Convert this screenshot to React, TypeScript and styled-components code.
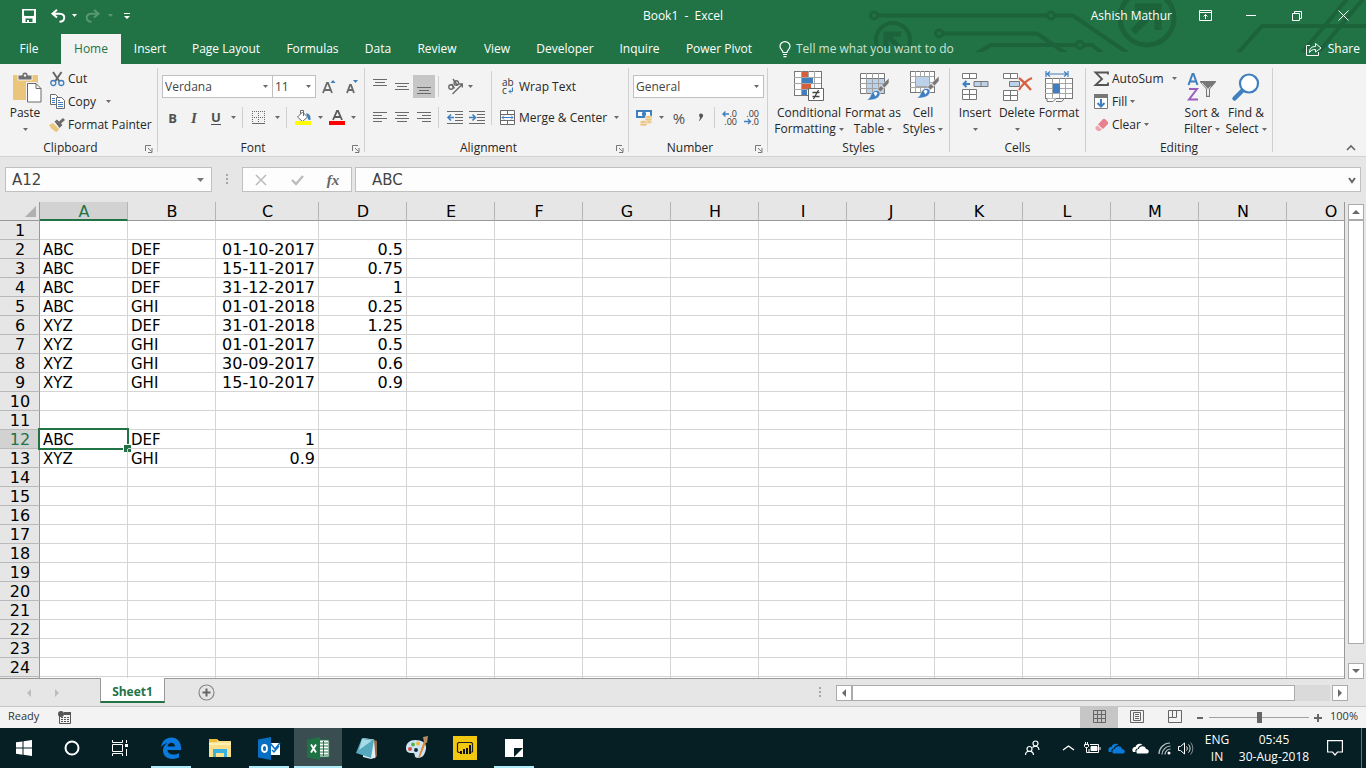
import React from "react";
import styled, { createGlobalStyle, css } from "styled-components";

const green = "#217346";
const ink = "#262626";
const steel = "#6a6a6a";
const blue = "#3f7fbf";
const uiFont = '"Open Sans", "Noto Sans", sans-serif';
const cellFont = '"DejaVu Sans", Verdana, sans-serif';

const GlobalStyle = createGlobalStyle`
  * { box-sizing: border-box; }
  body { margin: 0; font-family: ${uiFont}; font-size: 12px; line-height: 16px; color: ${ink}; }
  button, input, select { font: inherit; color: inherit; margin: 0; padding: 0; border: 0; background: none; border-radius: 0; outline: none; }
  button { cursor: pointer; }
  svg { display: block; flex: none; overflow: visible; }
`;

const Window = styled.div`
  display: flex;
  flex-direction: column;
  height: 100vh;
  overflow: hidden;
  background: #e6e6e6;
`;

/* ---------- title bar and tabs ---------- */

const Header = styled.header`
  position: relative;
  flex: none;
  background: ${green};
  color: #fff;
`;

const Circuit = styled.svg`
  position: absolute;
  top: 0;
  right: 0;
  overflow: hidden;
`;

const TitleBar = styled.div`
  position: relative;
  display: grid;
  grid-template-columns: 1fr auto 1fr;
  align-items: center;
  height: 34px;
  padding-bottom: 3px;
`;

const QuickAccess = styled.div`
  display: flex;
  align-items: center;
  padding-left: 16px;
`;

const QuickButton = styled.button<{ $w: number; $dim?: boolean }>`
  display: flex;
  align-items: center;
  justify-content: center;
  width: ${(p) => p.$w}px;
  height: 24px;
  opacity: ${(p) => (p.$dim ? 0.25 : 1)};
`;

const Title = styled.div`
  white-space: pre;
`;

const WindowControls = styled.div`
  display: flex;
  align-items: center;
  justify-content: flex-end;
`;

const UserName = styled.button`
  margin-right: 10px;
`;

const WindowButton = styled.button`
  display: flex;
  align-items: center;
  justify-content: center;
  width: 46px;
  height: 31px;
`;

const TabBar = styled.nav`
  position: relative;
  display: flex;
  height: 30px;
`;

const TabButton = styled.button<{ $w: number; $active?: boolean }>`
  width: ${(p) => p.$w}px;
  white-space: nowrap;
  ${(p) => p.$active && css`background: #f3f3f3; color: ${green};`}
`;

const TellMe = styled.button`
  display: flex;
  align-items: center;
  gap: 5px;
  margin-left: 14px;
  color: #cfe3d7;
  white-space: nowrap;
`;

const Share = styled.button`
  display: flex;
  align-items: center;
  gap: 6px;
  margin-left: auto;
  padding-right: 6px;
`;

/* ---------- ribbon ---------- */

const Ribbon = styled.div`
  display: flex;
  flex: none;
  height: 93px;
  background: #f3f3f3;
  border-bottom: 1px solid #d2d2d2;
`;

const GroupBox = styled.section<{ $w: number }>`
  display: flex;
  flex-direction: column;
  flex: none;
  width: ${(p) => p.$w}px;
`;

const GroupBody = styled.div<{ $left?: number }>`
  display: flex;
  height: 76px;
  padding-left: ${(p) => p.$left ?? 4}px;
`;

const GroupFooter = styled.div`
  display: flex;
  align-items: center;
  height: 16px;
`;

const GroupName = styled.div`
  flex: 1;
  text-align: center;
`;

const Launcher = styled.button`
  display: flex;
  width: 16px;
  height: 14px;
  padding: 4px 0 0 4px;
`;

const GroupLine = styled.div`
  flex: none;
  width: 1px;
  margin: 4px 0;
  background: #d0d0d0;
`;

const BigButton = styled.button<{ $w: number }>`
  display: flex;
  flex-direction: column;
  align-items: center;
  width: ${(p) => p.$w}px;
  padding-top: 7px;
  white-space: nowrap;
`;

const BigIcon = styled.span`
  display: flex;
  align-items: center;
  justify-content: center;
  height: 32px;
  margin-bottom: 2px;
`;

const BigLine = styled.span`
  display: flex;
  align-items: center;
  justify-content: center;
  gap: 3px;
  height: 16px;
`;

const Stack = styled.div<{ $left?: number; $right?: number }>`
  display: flex;
  flex-direction: column;
  padding-top: 3px;
  margin-left: ${(p) => p.$left ?? 0}px;
  margin-right: ${(p) => p.$right ?? 0}px;
`;

const SmallButton = styled.button`
  display: flex;
  align-items: center;
  gap: 3px;
  height: 23px;
  white-space: nowrap;
`;

const IconSlot = styled.span`
  display: flex;
  align-items: center;
  justify-content: center;
  width: 16px;
`;

const Rows = styled.div<{ $left?: number }>`
  display: flex;
  flex-direction: column;
  padding-top: 7px;
  margin-left: ${(p) => p.$left ?? 0}px;
`;

const Row = styled.div`
  display: flex;
  align-items: center;
  height: 31px;
`;

const ToolButton = styled.button<{ $w?: number; $on?: boolean }>`
  display: flex;
  align-items: center;
  justify-content: center;
  flex: none;
  width: ${(p) => p.$w ?? 22}px;
  height: 23px;
  color: #505050;
  background: ${(p) => (p.$on ? "#c6c6c6" : "none")};
`;

const Glyph = styled.span<{ $italic?: boolean; $under?: boolean; $serif?: boolean; $light?: boolean }>`
  font-size: ${(p) => (p.$light || p.$serif ? 15 : 13)}px;
  font-weight: ${(p) => (p.$light ? 400 : 700)};
  font-style: ${(p) => (p.$italic ? "italic" : "normal")};
  font-family: ${(p) => (p.$serif ? '"Liberation Serif", serif' : uiFont)};
  border-bottom: ${(p) => (p.$under ? "1px solid #505050" : "0")};
  line-height: 14px;
`;

const ToolLine = styled.div<{ $h?: number }>`
  flex: none;
  width: 1px;
  height: ${(p) => p.$h ?? 21}px;
  margin: 0 3px;
  background: #d0d0d0;
`;

const LabelButton = styled.button`
  display: flex;
  align-items: center;
  gap: 3px;
  height: 31px;
  white-space: nowrap;
`;

const LabelText = styled.span<{ $w?: number }>`
  width: ${(p) => (p.$w ? `${p.$w}px` : "auto")};
  text-align: left;
`;

const Combo = styled.label<{ $w: number; $joined?: boolean }>`
  position: relative;
  display: flex;
  align-items: center;
  width: ${(p) => p.$w}px;
  height: 23px;
  margin-left: ${(p) => (p.$joined ? -1 : 0)}px;
  border: 1px solid #c0c0c0;
  background: #fff;
  color: #444;
  svg { position: absolute; right: 4px; pointer-events: none; }
`;

const ComboSelect = styled.select`
  appearance: none;
  width: 100%;
  height: 21px;
  padding-left: 2px;
`;

const RibbonEnd = styled.div`
  display: flex;
  flex: 1;
  align-items: flex-end;
  justify-content: flex-end;
  padding: 0 10px 4px 0;
`;

/* ---------- formula bar ---------- */

const FormulaBar = styled.div`
  display: flex;
  align-items: center;
  flex: none;
  height: 45px;
  padding: 0 5px;
  font-family: ${cellFont};
  font-size: 15px;
  color: #444;
`;

const Field = styled.div<{ $w?: number }>`
  display: flex;
  align-items: center;
  ${(p) => (p.$w ? css`flex: none; width: ${p.$w}px;` : css`flex: 1; min-width: 0;`)}
  height: 25px;
  border: 1px solid #c0c0c0;
  background: #fdfdfd;
`;

const FieldInput = styled.input<{ $pad: number }>`
  flex: 1;
  min-width: 0;
  height: 23px;
  padding-left: ${(p) => p.$pad}px;
`;

const FieldButton = styled.button<{ $w: number }>`
  display: flex;
  align-items: center;
  justify-content: center;
  width: ${(p) => p.$w}px;
  height: 23px;
`;

const DotsSlot = styled.div`
  display: flex;
  justify-content: center;
  width: 30px;
`;

const FieldGap = styled.div`
  width: 3px;
`;

const FxGlyph = styled.span`
  font: italic 700 15px/16px "Liberation Serif", serif;
  color: #666;
`;

/* ---------- worksheet ---------- */

const SheetArea = styled.main`
  display: flex;
  flex: 1;
  min-height: 0;
`;

const GridPane = styled.div`
  flex: 1;
  min-width: 0;
  overflow: hidden;
  background: #fff;
  border-right: 1px solid #999;
  border-bottom: 1px solid #999;
`;

const Grid = styled.table`
  table-layout: fixed;
  width: 1375px;
  border-collapse: separate;
  border-spacing: 0;
  background: #fff;
  font-family: ${cellFont};
  color: #000;
`;

const ColHead = styled.th<{ $active?: boolean; $corner?: boolean }>`
  height: 19px;
  padding: ${(p) => (p.$active ? "2px 0 0 1px" : "2px 0 0 1px")};
  font-size: 16px;
  font-weight: 400;
  line-height: 15px;
  vertical-align: top;
  background: ${(p) => (p.$active ? "#d2d2d2" : "#e6e6e6")};
  color: ${(p) => (p.$active ? green : "#000")};
  border-right: 1px solid ${(p) => (p.$corner ? "#999" : "#b4b4b4")};
  border-bottom: ${(p) => (p.$active ? `2px solid ${green}` : "1px solid #999")};
  svg { margin: 2px 0 0 24px; }
`;

const RowHead = styled.th<{ $active?: boolean }>`
  height: 19px;
  padding: 2px 0 0 1px;
  font-size: 16px;
  font-weight: 400;
  line-height: 16px;
  background: ${(p) => (p.$active ? "#d2d2d2" : "#e6e6e6")};
  color: ${(p) => (p.$active ? green : "#000")};
  border-right: 1px solid #999;
  border-bottom: 1px solid #b9b9b9;
`;

const Cell = styled.td<{ $num?: boolean }>`
  position: relative;
  height: 19px;
  padding: 2px 3px 0;
  font-size: ${(p) => (p.$num ? 16 : 15)}px;
  line-height: 16px;
  text-align: ${(p) => (p.$num ? "right" : "left")};
  white-space: nowrap;
  border-right: 1px solid #d4d4d4;
  border-bottom: 1px solid #d4d4d4;
`;

const Selection = styled.div`
  position: absolute;
  inset: -2px;
  border: 2px solid ${green};
  &::after {
    content: "";
    position: absolute;
    right: -5px;
    bottom: -5px;
    width: 7px;
    height: 7px;
    background: ${green};
    border: 1px solid #fff;
  }
`;

const VScroll = styled.div`
  display: flex;
  flex-direction: column;
  flex: none;
  width: 16px;
  margin: 2px 2px 0 3px;
`;

const ScrollButton = styled.button`
  display: flex;
  align-items: center;
  justify-content: center;
  flex: none;
  width: 16px;
  height: 16px;
  background: #fff;
  border: 1px solid #ababab;
`;

const VTrack = styled.div`
  flex: 1;
  padding-bottom: 19px;
`;

const VThumb = styled.div`
  height: 100%;
  background: #fff;
  border: 1px solid #ababab;
`;

const SheetBar = styled.div`
  display: flex;
  align-items: center;
  flex: none;
  height: 28px;
  border-bottom: 1px solid #c6c6c6;
`;

const SheetNav = styled.div`
  display: flex;
  width: 100px;
  padding-left: 15px;
`;

const BarButton = styled.button<{ $w: number }>`
  display: flex;
  align-items: center;
  justify-content: center;
  width: ${(p) => p.$w}px;
  height: 22px;
`;

const SheetTab = styled.button`
  position: relative;
  align-self: flex-start;
  width: 65px;
  height: 25px;
  margin-top: -1px;
  margin-right: 30px;
  padding-top: 4px;
  background: #fff;
  color: ${green};
  font-weight: 700;
  border: solid #999;
  border-width: 0 1px 2px;
  border-bottom-color: ${green};
`;

const HScroll = styled.div`
  display: flex;
  width: 512px;
  margin-right: 18px;
`;

const HTrack = styled.div`
  flex: 1;
  display: flex;
  padding-right: 35px;
  margin-right: 2px;
  background: #dadada;
`;

const HThumb = styled.div`
  flex: 1;
  background: #fff;
  border: 1px solid #ababab;
`;

const DotsGap = styled.div`
  display: flex;
  margin: 0 15px 0 auto;
`;

/* ---------- status bar ---------- */

const StatusBar = styled.footer`
  display: flex;
  align-items: center;
  flex: none;
  height: 21px;
  padding: 0 8px;
  background: #f3f3f3;
  font-size: 11px;
  color: #333;
`;

const StatusText = styled.span<{ $w: number; $right?: boolean }>`
  width: ${(p) => p.$w}px;
  padding-bottom: 3px;
  text-align: ${(p) => (p.$right ? "right" : "left")};
`;

const Views = styled.div`
  display: flex;
  align-self: stretch;
  margin-left: auto;
`;

const ViewButton = styled.button<{ $on?: boolean }>`
  display: flex;
  align-items: center;
  justify-content: center;
  width: 38px;
  padding-bottom: 2px;
  background: ${(p) => (p.$on ? "#c6c6c6" : "none")};
`;

const ZoomSlider = styled.input`
  appearance: none;
  width: 106px;
  height: 12px;
  background: linear-gradient(#a0a0a0, #a0a0a0) center / 100px 1px no-repeat;
  &::-webkit-slider-thumb {
    appearance: none;
    width: 5px;
    height: 11px;
    background: #666;
  }
`;

/* ---------- task bar ---------- */

const TaskBar = styled.div`
  display: flex;
  flex: none;
  height: 40px;
  background: #051f24;
  color: #fff;
`;

const SystemButtons = styled.div`
  display: flex;
  width: 147px;
`;

const Apps = styled.div`
  display: flex;
  gap: 1px;
`;

const TaskButton = styled.button<{ $open?: boolean; $active?: boolean }>`
  display: flex;
  align-items: center;
  justify-content: center;
  width: 48px;
  height: 40px;
  background: ${(p) => (p.$active ? "#3a4e52" : "none")};
  ${(p) => p.$open && css`
    background-image: linear-gradient(#aeeaf8, #aeeaf8);
    background-repeat: no-repeat;
    background-position: center bottom;
    background-size: ${p.$active ? 48 : 40}px 2px;
  `}
`;

const Tray = styled.div`
  display: flex;
  align-items: center;
  margin-left: auto;
`;

const TrayButton = styled.button<{ $w?: number }>`
  display: flex;
  align-items: center;
  justify-content: center;
  width: ${(p) => p.$w ?? 24}px;
  height: 40px;
  text-align: center;
  white-space: nowrap;
  line-height: 17px;
`;

const ShowDesktop = styled.button`
  width: 5px;
  height: 40px;
  border-left: 1px solid #5f7275;
`;

/* ---------- small drawings ---------- */

const Caret = ({ color = "#6a6a6a" }: { color?: string }) => (
  <svg width="5" height="3" viewBox="0 0 5 3"><path d="M0 0h5L2.500 3z" fill={color} /></svg>
);

const Dots = () => (
  <svg width="2" height="11" fill="#a6a6a6"><path d="M0 0h2v2H0zM0 4h2v2H0zM0 8h2v2H0z" /></svg>
);

const Triangle = ({ dir, color = "#6a6a6a" }: { dir: "up" | "down" | "left" | "right"; color?: string }) => {
  const shapes = { up: "M0 6l4-4 4 4z", down: "M0 2l4 4 4-4z", left: "M6 0L2 4l4 4z", right: "M2 0l4 4-4 4z" };
  return <svg width="8" height="8"><path d={shapes[dir]} fill={color} /></svg>;
};

const Lines = ({ rows, top = 0 }: { rows: [number, number][]; top?: number }) => (
  <svg width="14" height="15" stroke={steel} shapeRendering="crispEdges">
    {rows.map(([a, b], i) => <path key={i} d={`M${a} ${top + i * 3 + 0.5}H${b}`} />)}
  </svg>
);

const LauncherIcon = () => (
  <svg width="8" height="8" fill="none" stroke="#777"><path d="M.5 6V.5H6M3 3l3.500 3.500M7 3v4.500H3" /></svg>
);

const SaveIcon = () => (
  <svg width="14" height="14" viewBox="0 0 14 14"><path fillRule="evenodd" fill="#fff" d="M0 0h14v14H0zM2 1.500v5l1 .5h8l1-.5v-5zM3.500 9.500V13H5v-2h2v2h3.500V9.500z" /></svg>
);

const UndoIcon = ({ flip }: { flip?: boolean }) => (
  <svg width="15" height="14" viewBox="0 0 15 14" fill="none" stroke="#fff" strokeWidth="2">
    <g transform={flip ? "translate(15 0) scale(-1 1)" : undefined}><path d="M6 .8L1.500 4.700 6 8.600M2 4.700h7c6 0 5.500 8-.5 8" /></g>
  </svg>
);

const CustomizeIcon = () => (
  <svg width="6" height="8" fill="#fff"><path d="M0 1h6v1H0zM0 4h6L3 7z" /></svg>
);

const BulbIcon = () => (
  <svg width="12" height="17" viewBox="0 0 12 17" fill="none" stroke="#fff" strokeWidth="1.200">
    <path d="M4 11.500C4 9 1 8.500 1 5.300A5 4.700 0 0 1 11 5.300C11 8.500 8 9 8 11.500zM4 13.500h4M4.500 15.700h3" />
  </svg>
);

const ShareIcon = () => (
  <svg width="16" height="14" viewBox="0 0 16 14" fill="none" stroke="#fff">
    <path d="M4 3.500H.5v10h12V10M3.500 10.500c0-4 2-6 6-6V1.500l5.500 4.500-5.500 4V7.500c-3 0-4.500.5-6 3z" />
  </svg>
);

const PasteIcon = () => (
  <svg width="26" height="31" viewBox="-1 0 26 31">
    <rect x="0" y="3" width="25" height="25" rx="1" fill="#ecc57c" />
    <path d="M5 8V3h4c0-4 6-4 6 0h4v5z" fill="#6e6e6e" stroke="#f3f3f3" />
    <circle cx="12" cy="3.500" r="1.200" fill="#f3f3f3" />
    <path d="M14.500 11.500h8.500l5 5v13.500H14.500z" fill="#fff" stroke="#f3f3f3" strokeWidth="3" />
    <path d="M14.500 11.500h8.500l5 5v13.500H14.500z M23 11.500v5h5" fill="#fff" stroke="#6a6a6a" />
  </svg>
);

const CutIcon = () => (
  <svg width="15" height="16" viewBox="0 0 15 16" fill="none">
    <path d="M3 1l6.500 9.500M11.500 1L5 10.500" stroke="#666" strokeWidth="2" />
    <circle cx="3.300" cy="12" r="2.500" stroke={blue} strokeWidth="1.300" /><circle cx="11.300" cy="12" r="2.500" stroke={blue} strokeWidth="1.300" />
  </svg>
);

const CopyIcon = () => (
  <svg width="15" height="15" viewBox="0 0 15 15" fill="#fff" stroke="#6a6a6a">
    <path d="M.5.500h5l3 3v7h-8z" /><path d="M6.500 3.500h5l3 3v8h-8z" />
    <path d="M2 4.500h3M2 6.500h3M2 8.500h3M8 8.500h5M8 10.500h5M8 12.500h5M8 6.500h2" stroke={blue} />
  </svg>
);

const PainterIcon = () => (
  <svg width="16" height="14" viewBox="0 0 16 14">
    <path d="M0 7l4-2 6 6-2 3-3-1-1-2-1 .5z" fill="#ecc57c" />
    <path d="M5.500 3.500L8 1.500l2 2 4-3.500L16 2l-4 3.500L13.500 7l-3 3z" fill="#6a6a6a" />
  </svg>
);

const BordersIcon = () => (
  <svg width="14" height="14" shapeRendering="crispEdges" stroke="#6a6a6a" fill="none">
    <path d="M.5 0v12M6.500 0v12M12.500 0v12M0 .5h13M0 6.500h13" strokeDasharray="1 1" /><path d="M0 12.500h13" />
  </svg>
);

const FillColorIcon = () => (
  <svg width="17" height="17" viewBox="0 0 17 17">
    <path d="M7.500 3l5 5-5 4.500L2.500 8z M5.500 5V1.500h3V7" fill="#fff" stroke="#6a6a6a" />
    <path d="M11 4.500c3-.5 5 2 4.500 6.500-2 .5-3-1-3-3z" fill={blue} /><path d="M0 12h16v4H0z" fill="#ff0" />
  </svg>
);

const FontColorIcon = () => (
  <svg width="17" height="17" viewBox="0 0 17 17">
    <path d="M4 11L8 2h1l4 9M5.500 8h6" stroke="#5a5a5a" strokeWidth="1.800" fill="none" /><path d="M0 12h16v4H0z" fill="#f00" />
  </svg>
);

const SizeIcon = ({ grow }: { grow?: boolean }) => (
  <svg width="16" height="18" viewBox="0 0 16 18">
    {grow
      ? <><path d="M1 15L5 5h1l4 10M2.500 12h6" fill="none" stroke="#6a6a6a" strokeWidth="1.800" /><path d="M8.500 5L11 2l2.500 3z" fill={blue} /></>
      : <><path d="M2 15l3-8h1l3 8M3 12h5" fill="none" stroke="#6a6a6a" strokeWidth="1.800" /><path d="M8 2h5l-2.500 3z" fill={blue} /></>}
  </svg>
);

const OrientationIcon = () => (
  <svg width="17" height="16" viewBox="0 0 17 16" fill="none" stroke="#6a6a6a" strokeWidth="1.400">
    <path d="M5.500 15L15 5.500M11.500 5H15.300v3.500" /><circle cx="4" cy="8" r="2.200" /><path d="M4.500 5l3 4.500M6 0l4.500 6.500" /><circle cx="9.300" cy="4" r="2.200" />
  </svg>
);

const IndentIcon = ({ right }: { right?: boolean }) => (
  <svg width="17" height="14" shapeRendering="crispEdges" fill="none" stroke="#6a6a6a">
    <path d="M0 .5h16M8 3.500h8M8 6.500h8M8 9.500h8M0 12.500h16" />
    <g shapeRendering="auto" stroke={blue} strokeWidth="1.600"><path d={right ? "M0 6.500h6M3.500 3.500l3 3-3 3" : "M1 6.500h6M4 3.500l-3 3 3 3"} /></g>
  </svg>
);

const WrapIcon = () => (
  <svg width="16" height="16" viewBox="0 0 16 16">
    <text x="2" y="7" fontSize="10" fontFamily="Open Sans" fill="#333">ab</text>
    <text x="2" y="15" fontSize="10" fontFamily="Open Sans" fill="#333">c</text>
    <path d="M12.500 8.500v4H9M11 10.500l-2 2 2 2" fill="none" stroke={blue} />
  </svg>
);

const MergeIcon = () => (
  <svg width="16" height="16" viewBox="0 0 16 16" fill="#fff" stroke="#6a6a6a">
    <path d="M.5.500h14v14H.5zM.5 4.500h14M.5 10.500h14M7.500.500v4M7.500 10.500v4" />
    <path d="M2 7.500h11M4 5.500l-2 2 2 2M11 5.500l2 2-2 2" fill="none" stroke={blue} />
  </svg>
);

const CurrencyIcon = () => (
  <svg width="17" height="17" viewBox="0 0 17 17">
    <path d="M1 2h14v6H1z" fill="#fff" stroke={blue} strokeWidth="2" /><circle cx="8" cy="5" r="2.200" fill={blue} />
    <g fill="#ecc57c" stroke="#f3f3f3" strokeWidth=".5">
      <ellipse cx="12.500" cy="13" rx="3.500" ry="1.500" /><ellipse cx="12.500" cy="10.500" rx="3.500" ry="1.500" /><ellipse cx="12.500" cy="8" rx="3.500" ry="1.500" />
      <ellipse cx="7.500" cy="15.500" rx="3.500" ry="1.500" /><ellipse cx="7.500" cy="13" rx="3.500" ry="1.500" />
    </g>
  </svg>
);

const DecimalIcon = ({ less }: { less?: boolean }) => (
  <svg width="16" height="16" viewBox="0 0 16 16">
    <text x="15" y="7" fontSize="9" textAnchor="end" fontFamily="Open Sans" fill="#333">{less ? ".00" : ".0"}</text>
    <text x="15" y="15" fontSize="9" textAnchor="end" fontFamily="Open Sans" fill="#333">{less ? ".0" : ".00"}</text>
    <path d={less ? "M0 11.500h6M4 9l2.500 2.500L4 14" : "M1 4h6M3.500 1.500L1 4l2.500 2.500"} fill="none" stroke={blue} strokeWidth="1.400" />
  </svg>
);

const SheetGrid = ({ w, h, cols, rows }: { w: number; h: number; cols: number; rows: number }) => {
  let d = "";
  for (let i = 1; i < cols; i++) d += `M${Math.round((i * w) / cols) + 0.5} 0V${h}`;
  for (let i = 1; i < rows; i++) d += `M0 ${Math.round((i * h) / rows) + 0.5}H${w}`;
  return <><rect x=".5" y=".5" width={w} height={h} fill="#fff" stroke="#777" /><path d={d} stroke="#a6a6a6" /></>;
};

const Brush = () => (
  <g>
    <path d="M29 5v5l-4.500 5-3-3z" fill="#7a7a7a" stroke="#f3f3f3" strokeWidth=".6" />
    <path d="M21 12.500l3 3-3.500 3.500-3-3z" fill="#7a7a7a" stroke="#f3f3f3" strokeWidth=".6" />
    <path d="M16 17.500c3-.5 5 2 3.500 5-2 4-8 5-13 4.500 3.500-1.500 3.500-3.500 4.500-5.500 1-2.500 3-4 5-4z" fill={blue} stroke="#f3f3f3" strokeWidth=".6" />
    <path d="M13.500 20c1.500-1.500 3.500-1 4 .5l-2 3z" fill="#fff" />
  </g>
);

const ConditionalIcon = () => (
  <svg width="32" height="32" viewBox="-1 0 32 32">
    <g transform="translate(0 0)"><SheetGrid w={27} h={24} cols={4} rows={4} /></g>
    <path d="M8 1h6v5H8zM8 13h9v5H8z" fill="#d75f3c" /><path d="M8 7h11v5H8zM8 19h5v5H8z" fill={blue} />
    <path d="M14.500 17.500h15v12h-15z" fill="#fff" stroke="#666" />
    <path d="M18.500 21.500h7M18.500 25.500h7M24.500 19l-5 9" stroke="#444" strokeWidth="1.300" />
  </svg>
);

const FormatTableIcon = () => (
  <svg width="32" height="32" viewBox="-3 0 32 32">
    <g transform="translate(0 2)"><rect x=".5" y=".5" width="24" height="20" fill="#fff" /><path d="M7 6h18v15H7z" fill="#bcd2ea" /><path d="M.5.500h24v20H.5zM.5 5.500h24" fill="none" stroke="#777" /><path d="M6.500 0v21M12.500 0v21M18.500 0v21M0 10.500h24M0 15.500h24" stroke="#a0a0a0" /><Brush /></g>
  </svg>
);

const CellStylesIcon = () => (
  <svg width="32" height="32" viewBox="-3 0 32 32">
    <g transform="translate(0 0)"><SheetGrid w={24} h={21} cols={5} rows={4} /><path d="M5.500 5.500h14v10h-14z" fill="#bcd2ea" stroke="#a6a6a6" /><Brush /></g>
  </svg>
);

const CellRows = ({ at }: { at: number[] }) => (
  <>{at.map((y) => <path key={y} d={`M.5 ${y}.5h14v5h-14zM7.500 ${y}v5`} />)}</>
);

const InsertIcon = () => (
  <svg width="28" height="30" viewBox="-1 0 28 30" fill="#fff" stroke="#777">
    <CellRows at={[1, 17, 22]} /><path d="M12 9.500h14v5H12zM19 9v5" fill="#bcd2ea" />
    <path d="M8 12H2M4.500 9L1.500 12l3 3" fill="none" stroke={blue} strokeWidth="2" />
  </svg>
);

const DeleteIcon = () => (
  <svg width="30" height="30" viewBox="-1 0 30 30" fill="#fff" stroke="#777">
    <CellRows at={[1, 18, 23]} /><path d="M6.500 9.500h10v5h-10z" fill="#bcd2ea" />
    <path d="M16 6c4 3 8 7 12 12M29 6c-5 2-10 7-13 12" fill="none" stroke="#d75f3c" strokeWidth="2.200" />
  </svg>
);

const FormatIcon = () => (
  <svg width="29" height="32" viewBox="0 0 29 32">
    <path d="M1 0v6M23 0v6M2 3h20M5 .5L2 3l3 2.500M19 .5L22 3l-3 2.500" fill="none" stroke={blue} strokeWidth="1.200" />
    <g transform="translate(0 7)"><SheetGrid w={27} h={20} cols={4} rows={4} /><path d="M8 6h7v9H8z" fill={blue} /></g>
    <path d="M2 27.500v3h6l3-3M11 30.500h6l2-3" fill="#fff" stroke="#777" />
  </svg>
);

const SumIcon = () => (
  <svg width="15" height="16" viewBox="0 0 15 16" fill="none" stroke="#555" strokeWidth="1.800"><path d="M14 3.500V1.500H1.500L8 8l-6.500 6H14v-2.500" /></svg>
);

const FillIcon = () => (
  <svg width="15" height="16" viewBox="0 0 15 16"><path d="M.5.500h13v14H.5z" fill="#fff" stroke="#777" /><path d="M0 0h14v4H0z" fill="#777" /><path d="M7 5v7M3.500 9L7 12.500 10.500 9" fill="none" stroke={blue} strokeWidth="2" /></svg>
);

const EraserIcon = () => (
  <svg width="15" height="14" viewBox="0 0 15 14"><path d="M9 1h2l3 3v2l-5 5-5-4.500z" fill="#e8808f" /><path d="M3.500 7.500L8 11.500 6 13H3.500L1.500 11V9z" fill="#f0a4ae" /></svg>
);

const SortIcon = () => (
  <svg width="30" height="30" viewBox="0 0 30 30" fill="none">
    <path d="M1.500 13L5.500 2h1l4 11M3 9.500h6" stroke={blue} strokeWidth="2" /><path d="M2 17h8L2 27.500h9" stroke="#9a5fbd" strokeWidth="2" />
    <path d="M13 9h16v1l-6 7v8h-4v-8l-6-7z" fill="#777" /><path d="M15 11l5.500 6v6.500h1V17l2-2.500" stroke="#eee" />
  </svg>
);

const FindIcon = () => (
  <svg width="28" height="29" viewBox="0 0 28 29"><path d="M10 18L2.500 25.500" stroke={blue} strokeWidth="4.500" strokeLinecap="round" /><circle cx="17" cy="10.500" r="9" fill="#fff" stroke={blue} strokeWidth="2.200" /></svg>
);

const Chevron = ({ up, w = 8, color = "#666", sw = 1.6 }: { up?: boolean; w?: number; color?: string; sw?: number }) => (
  <svg width={w + 2} height="8" fill="none" stroke={color} strokeWidth={sw}><path d={up ? `M1 6l${w / 2}-4 ${w / 2} 4` : `M1 2l${w / 2} 4 ${w / 2}-4`} /></svg>
);

const CircuitArt = () => (
  <Circuit width="500" height="52" viewBox="866 0 500 52" fill="none" stroke="#1c633b" strokeWidth="4" aria-hidden="true">
    <circle cx="874" cy="15.500" r="3.500" strokeWidth="3" /><path d="M878 15.500h169M1055 15.500h18l54 37" />
    <circle cx="1051" cy="15.500" r="3.500" strokeWidth="3" />
    <circle cx="893" cy="40" r="17" strokeWidth="4" /><path d="M886 48V34h15M887 35l17 17" strokeWidth="5" />
    <circle cx="939" cy="33.500" r="3.500" strokeWidth="3" /><path d="M943 33.500h94l29 20" />
    <path d="M977 53l14-8h84M1084 45h8l10 8" /><circle cx="1080" cy="45" r="3.500" strokeWidth="3" />
    <circle cx="1147" cy="18" r="27" strokeWidth="5" /><path d="M1135 7h23v23M1157 8l-24 24" strokeWidth="7" />
    <path d="M1238 53l24-27h104M1302 53l45-54M1318 53l45-54" />
  </Circuit>
);

/* ---------- task bar drawings ---------- */

const EdgeIcon = () => (
  <svg width="22" height="22" viewBox="0 0 22 22"><path fill="#0a7bdc" d="M1 10C2 4 6 .5 11.500.500 17 .5 21 5 21 10.500V13H7.500c.5 5.500 8 5.500 11.500 3v4.500C13 23.500 3 22 3 13.500 3 10 5 7.500 7.500 6 5 6.500 2.500 8 1 10zm6.500-.5H15C15 4.500 8 4.500 7.500 9.500z" /></svg>
);

const ExplorerIcon = () => (
  <svg width="22" height="19" viewBox="0 0 22 19"><path d="M0 0h8l2 2h12v16H0z" fill="#fbe08a" /><path d="M0 0h8v3H0z" fill="#eebb3b" /><path d="M0 4h22v2H0z" fill="#fff0b5" /><path d="M4 10h14v8h-3v-4H7v4H4z" fill="#3ab0e0" /></svg>
);

const OutlookIcon = () => (
  <svg width="22" height="23" viewBox="0 0 22 23"><path d="M12 6h10v12H12z" fill="#fff" /><path d="M12 6l5 6 5-6M14 13l2 2 5-6" fill="none" stroke="#0a6fc2" strokeWidth="1.500" /><path d="M0 2.500L13 0v23L0 20.500z" fill="#0a6fc2" /><ellipse cx="6.500" cy="11.500" rx="2.500" ry="3.500" fill="none" stroke="#fff" strokeWidth="1.800" /></svg>
);

const ExcelIcon = () => (
  <svg width="22" height="23" viewBox="0 0 22 23"><path d="M12 3h10v17H12z" fill="#fff" stroke="#217346" /><path d="M13 6h8M13 9h8M13 12h8M13 15h8M13 18h8M16.500 4v15" stroke="#217346" /><path d="M0 2.500L13 0v23L0 20.500z" fill="#1f7244" /><path d="M4 7.500l5 8M9 7.500l-5 8" stroke="#fff" strokeWidth="1.900" /></svg>
);

const NotepadIcon = () => (
  <svg width="24" height="23" viewBox="0 0 24 23"><path d="M19 3l3 1v15l-3 3z" fill="#8c6b4a" /><path d="M8 1l11 1.500 1.500 18-4.500 1.500-8-2z" fill="#e4eff3" /><path d="M7 1l12 2-3 18-15-5z" fill="#56a9bd" /><path d="M7 2l10 1.500L4 13z" fill="#a9dbe6" /></svg>
);

const PaintIcon = () => (
  <svg width="25" height="24" viewBox="0 0 25 24"><path d="M11 4c7 0 12 3 11 9-1 5-3 9-8 9s-2-5-5-5-7 0-7-5 4-8 9-8z" fill="#cfe5f5" /><circle cx="6" cy="13" r="2" fill="#d9503f" /><circle cx="9" cy="8.500" r="2" fill="#59b04e" /><circle cx="14" cy="7.500" r="2" fill="#f0b93a" /><circle cx="12" cy="14" r="2" fill="#12303a" /><path d="M21 2l-7 20 2-1 7-17z" fill="#e08a2e" /><path d="M19 1l5-1-1 7-3-1z" fill="#b98d63" /></svg>
);

const PowerBiIcon = () => (
  <svg width="24" height="24" viewBox="0 0 24 24"><path d="M0 0h24v24H0z" fill="#f2c811" /><path d="M7 16.500H5.500l-1-1v-8l1-1h13l1 1v8l-1 1" fill="none" stroke="#222" strokeWidth="1.200" /><path d="M8 15v3M11 13v5M14 12v6M17 9v9" stroke="#111" strokeWidth="2" /></svg>
);

const StickyIcon = () => (
  <svg width="18" height="18"><path d="M0 0h18v18H0z" fill="#fff" /><path d="M9 9h9l-9 9z" fill="#051f24" /></svg>
);

const Cloud = ({ color }: { color: string }) => (
  <svg width="17" height="11" viewBox="0 0 17 11" fill={color}><path d="M1 9C-.5 6 1 4 3.500 4 4 1 8-.5 10.500 2 7.500 2 6 4 6 5.500 4 5.500 3 7 3.500 9z" /><path d="M5 10.500C3.500 8 5 6 7 6c0-3 6-4 7 0 3.500 0 3.500 4.500 1 4.500z" /></svg>
);

/* ---------- content ---------- */

const tabs: [string, number][] = [
  ["File", 58], ["Home", 60], ["Insert", 58], ["Page Layout", 94], ["Formulas", 79], ["Data", 52],
  ["Review", 66], ["View", 54], ["Developer", 82], ["Inquire", 67], ["Power Pivot", 92],
];

const FileGap = styled.div`
  width: 3px;
`;

const columns = "ABCDEFGHIJKLMNO".split("");

const data: Record<number, string[]> = {
  2: ["ABC", "DEF", "01-10-2017", "0.5"],
  3: ["ABC", "DEF", "15-11-2017", "0.75"],
  4: ["ABC", "DEF", "31-12-2017", "1"],
  5: ["ABC", "GHI", "01-01-2018", "0.25"],
  6: ["XYZ", "DEF", "31-01-2018", "1.25"],
  7: ["XYZ", "GHI", "01-01-2017", "0.5"],
  8: ["XYZ", "GHI", "30-09-2017", "0.6"],
  9: ["XYZ", "GHI", "15-10-2017", "0.9"],
  12: ["ABC", "DEF", "1"],
  13: ["XYZ", "GHI", "0.9"],
};

const rowNumbers = Array.from({ length: 25 }, (_, i) => i + 1);

type GroupProps = { name: string; width: number; left?: number; launcher?: boolean; children: React.ReactNode };

const Group = ({ name, width, left, launcher, children }: GroupProps) => (
  <>
    <GroupBox $w={width} aria-label={name}>
      <GroupBody $left={left}>{children}</GroupBody>
      <GroupFooter>
        <GroupName>{name}</GroupName>
        {launcher && <Launcher aria-label={`${name} settings`}><LauncherIcon /></Launcher>}
      </GroupFooter>
    </GroupBox>
    <GroupLine />
  </>
);

const Big = ({ w, icon, first, second }: { w: number; icon: React.ReactNode; first: string; second?: string }) => (
  <BigButton $w={w}>
    <BigIcon>{icon}</BigIcon>
    <BigLine>{first}</BigLine>
    <BigLine>{second}<Caret /></BigLine>
  </BigButton>
);

const center3: [number, number][] = [[0, 14], [2, 12], [0, 14]];

export default function App() {
  return (
    <Window>
      <GlobalStyle />
      <Header>
        <CircuitArt />
        <TitleBar>
          <QuickAccess>
            <QuickButton $w={26} aria-label="Save"><SaveIcon /></QuickButton>
            <QuickButton $w={32} aria-label="Undo"><UndoIcon /></QuickButton>
            <QuickButton $w={0} aria-label="Undo list"><Caret color="#fff" /></QuickButton>
            <QuickButton $w={36} $dim aria-label="Redo"><UndoIcon flip /></QuickButton>
            <QuickButton $w={0} $dim aria-label="Redo list"><Caret color="#fff" /></QuickButton>
            <QuickButton $w={34} aria-label="Customize toolbar"><CustomizeIcon /></QuickButton>
          </QuickAccess>
          <Title>Book1  -  Excel</Title>
          <WindowControls>
            <UserName>Ashish Mathur</UserName>
            <WindowButton aria-label="Ribbon display"><svg width="13" height="11" fill="none" stroke="#fff"><path d="M.5.500h12v10H.5zM.5 2.500h12M6.500 9V4.500M4.500 6.500l2-2 2 2" /></svg></WindowButton>
            <WindowButton aria-label="Minimize"><svg width="10" height="2" fill="#fff"><path d="M0 0h10v1H0z" /></svg></WindowButton>
            <WindowButton aria-label="Restore"><svg width="10" height="10" fill="none" stroke="#fff"><path d="M.5 2.500h7v7h-7zM2.500 2.500v-2h7v7h-2" /></svg></WindowButton>
            <WindowButton aria-label="Close"><svg width="11" height="11" stroke="#fff"><path d="M.5.500l10 10M10.500.500l-10 10" /></svg></WindowButton>
          </WindowControls>
        </TitleBar>
        <TabBar>
          {tabs.map(([name, w]) => (
            <React.Fragment key={name}>
              <TabButton $w={w} $active={name === "Home"}>{name}</TabButton>
              {name === "File" && <FileGap />}
            </React.Fragment>
          ))}
          <TellMe><BulbIcon />Tell me what you want to do</TellMe>
          <Share><ShareIcon />Share</Share>
        </TabBar>
      </Header>

      <Ribbon>
        <Group name="Clipboard" width={157} launcher>
          <Big w={42} icon={<PasteIcon />} first="Paste" />
          <Stack $left={3}>
            <SmallButton><IconSlot><CutIcon /></IconSlot>Cut</SmallButton>
            <SmallButton><IconSlot><CopyIcon /></IconSlot><LabelText $w={35}>Copy</LabelText><Caret /></SmallButton>
            <SmallButton><IconSlot><PainterIcon /></IconSlot>Format Painter</SmallButton>
          </Stack>
        </Group>

        <Group name="Font" width={206} launcher>
          <Rows>
            <Row>
              <Combo $w={111}><ComboSelect aria-label="Font name"><option>Verdana</option></ComboSelect><Caret /></Combo>
              <Combo $w={44} $joined><ComboSelect aria-label="Font size"><option>11</option></ComboSelect><Caret /></Combo>
              <ToolButton $w={28} aria-label="Increase font size"><SizeIcon grow /></ToolButton>
              <ToolButton $w={18} aria-label="Decrease font size"><SizeIcon /></ToolButton>
            </Row>
            <Row>
              <ToolButton $w={21} aria-label="Bold"><Glyph>B</Glyph></ToolButton>
              <ToolButton aria-label="Italic"><Glyph $italic $serif>I</Glyph></ToolButton>
              <ToolButton aria-label="Underline"><Glyph $under>U</Glyph></ToolButton>
              <ToolButton $w={12} aria-label="Underline style"><Caret /></ToolButton>
              <ToolLine />
              <ToolButton $w={26} aria-label="Borders"><BordersIcon /></ToolButton>
              <ToolButton $w={11} aria-label="Border style"><Caret /></ToolButton>
              <ToolLine />
              <ToolButton $w={26} aria-label="Fill colour"><FillColorIcon /></ToolButton>
              <ToolButton $w={9} aria-label="Fill colours"><Caret /></ToolButton>
              <ToolButton $w={24} aria-label="Font colour"><FontColorIcon /></ToolButton>
              <ToolButton $w={9} aria-label="Font colours"><Caret /></ToolButton>
            </Row>
          </Rows>
        </Group>

        <Group name="Alignment" width={263} launcher>
          <Rows>
            <Row>
              <ToolButton aria-label="Top align"><Lines rows={center3} /></ToolButton>
              <ToolButton aria-label="Middle align"><Lines rows={center3} top={4} /></ToolButton>
              <ToolButton $on aria-label="Bottom align"><Lines rows={center3} top={8} /></ToolButton>
              <ToolLine />
              <ToolButton $w={26} aria-label="Orientation"><OrientationIcon /></ToolButton>
              <ToolButton $w={5} aria-label="Orientation list"><Caret /></ToolButton>
            </Row>
            <Row>
              <ToolButton aria-label="Align left"><Lines top={2} rows={[[0, 14], [0, 9], [0, 14], [0, 9]]} /></ToolButton>
              <ToolButton aria-label="Centre"><Lines top={2} rows={[[0, 14], [2, 12], [0, 14], [2, 12]]} /></ToolButton>
              <ToolButton aria-label="Align right"><Lines top={2} rows={[[0, 14], [5, 14], [0, 14], [5, 14]]} /></ToolButton>
              <ToolLine />
              <ToolButton $w={26} aria-label="Decrease indent"><IndentIcon /></ToolButton>
              <ToolButton $w={18} aria-label="Increase indent"><IndentIcon right /></ToolButton>
            </Row>
          </Rows>
          <Rows $left={2}><ToolLine $h={54} /></Rows>
          <Rows $left={5}>
            <LabelButton><IconSlot><WrapIcon /></IconSlot>Wrap Text</LabelButton>
            <LabelButton><IconSlot><MergeIcon /></IconSlot><LabelText $w={92}>Merge &amp; Center</LabelText><Caret /></LabelButton>
          </Rows>
        </Group>

        <Group name="Number" width={138} launcher>
          <Rows>
            <Row>
              <Combo $w={131}><ComboSelect aria-label="Number format"><option>General</option></ComboSelect><Caret /></Combo>
            </Row>
            <Row>
              <ToolButton aria-label="Accounting format"><CurrencyIcon /></ToolButton>
              <ToolButton $w={12} aria-label="Accounting formats"><Caret /></ToolButton>
              <ToolButton $w={24} aria-label="Percent"><Glyph $light>%</Glyph></ToolButton>
              <ToolButton $w={20} aria-label="Comma"><svg width="6" height="9" fill="#555"><path d="M1 2a2 2 0 1 1 4 1.500L1.500 8H1l1-3z" /></svg></ToolButton>
              <ToolLine />
              <ToolButton $w={24} aria-label="Increase decimal"><DecimalIcon /></ToolButton>
              <ToolButton $w={20} aria-label="Decrease decimal"><DecimalIcon less /></ToolButton>
            </Row>
          </Rows>
        </Group>

        <Group name="Styles" width={181}>
          <Big w={74} icon={<ConditionalIcon />} first="Conditional" second="Formatting" />
          <Big w={54} icon={<FormatTableIcon />} first="Format as" second="Table" />
          <Big w={46} icon={<CellStylesIcon />} first="Cell" second="Styles" />
        </Group>

        <Group name="Cells" width={135}>
          <Big w={42} icon={<InsertIcon />} first="Insert" />
          <Big w={42} icon={<DeleteIcon />} first="Delete" />
          <Big w={42} icon={<FormatIcon />} first="Format" />
        </Group>

        <Group name="Editing" width={186} left={7}>
          <Stack $right={3}>
            <SmallButton><IconSlot><SumIcon /></IconSlot><LabelText $w={57}>AutoSum</LabelText><Caret /></SmallButton>
            <SmallButton><IconSlot><FillIcon /></IconSlot>Fill<Caret /></SmallButton>
            <SmallButton><IconSlot><EraserIcon /></IconSlot>Clear<Caret /></SmallButton>
          </Stack>
          <Big w={44} icon={<SortIcon />} first="Sort &amp;" second="Filter" />
          <Big w={44} icon={<FindIcon />} first="Find &amp;" second="Select" />
        </Group>
        <RibbonEnd><button aria-label="Collapse the ribbon"><Chevron up /></button></RibbonEnd>
      </Ribbon>

      <FormulaBar>
        <Field $w={207}>
          <FieldInput $pad={6} aria-label="Name box" defaultValue="A12" />
          <FieldButton $w={22} aria-label="Names"><svg width="7" height="4"><path d="M0 0h7L3.500 4z" fill="#777" /></svg></FieldButton>
        </Field>
        <DotsSlot><Dots /></DotsSlot>
        <Field $w={110}>
          <FieldButton $w={36} aria-label="Cancel"><svg width="12" height="12" stroke="#bdbdbd" strokeWidth="1.600"><path d="M1 1l10 10M11 1L1 11" /></svg></FieldButton>
          <FieldButton $w={36} aria-label="Enter"><svg width="13" height="12" fill="none" stroke="#bdbdbd" strokeWidth="2.400"><path d="M1 6l4 4 7-8" /></svg></FieldButton>
          <FieldButton $w={36} aria-label="Insert function"><FxGlyph>fx</FxGlyph></FieldButton>
        </Field>
        <FieldGap />
        <Field>
          <FieldInput $pad={16} aria-label="Formula" defaultValue="ABC" />
          <FieldButton $w={16} aria-label="Expand formula bar"><Chevron w={6} sw={2} /></FieldButton>
        </Field>
      </FormulaBar>

      <SheetArea>
        <GridPane>
          <Grid>
            <colgroup>
              <col style={{ width: 40 }} />
              {columns.map((c) => <col key={c} style={{ width: c === "C" ? 103 : 88 }} />)}
            </colgroup>
            <thead>
              <tr>
                <ColHead $corner aria-label="Select all"><svg width="11" height="11"><path d="M11 0v11H0z" fill="#b0b0b0" /></svg></ColHead>
                {columns.map((c) => <ColHead key={c} $active={c === "A"}>{c}</ColHead>)}
              </tr>
            </thead>
            <tbody>
              {rowNumbers.map((n) => (
                <tr key={n}>
                  <RowHead $active={n === 12}>{n}</RowHead>
                  {columns.map((c, i) => (
                    <Cell key={c} $num={i > 1}>
                      {data[n]?.[i]}
                      {n === 12 && c === "A" && <Selection />}
                    </Cell>
                  ))}
                </tr>
              ))}
            </tbody>
          </Grid>
        </GridPane>
        <VScroll>
          <ScrollButton aria-label="Scroll up"><Triangle dir="up" /></ScrollButton>
          <VTrack><VThumb /></VTrack>
          <ScrollButton aria-label="Scroll down"><Triangle dir="down" /></ScrollButton>
        </VScroll>
      </SheetArea>

      <SheetBar>
        <SheetNav>
          <BarButton $w={28} aria-label="Previous sheet"><Triangle dir="left" color="#bdbdbd" /></BarButton>
          <BarButton $w={28} aria-label="Next sheet"><Triangle dir="right" color="#bdbdbd" /></BarButton>
        </SheetNav>
        <SheetTab>Sheet1</SheetTab>
        <BarButton $w={22} aria-label="New sheet"><svg width="17" height="17" fill="none" stroke="#888"><circle cx="8.500" cy="8.500" r="7.500" strokeWidth="1.200" /><path d="M8.500 4.500v8M4.500 8.500h8" stroke="#666" strokeWidth="2" /></svg></BarButton>
        <DotsGap><Dots /></DotsGap>
        <HScroll>
          <ScrollButton aria-label="Scroll left"><Triangle dir="left" /></ScrollButton>
          <HTrack><HThumb /></HTrack>
          <ScrollButton aria-label="Scroll right"><Triangle dir="right" /></ScrollButton>
        </HScroll>
      </SheetBar>

      <StatusBar>
        <StatusText $w={50}>Ready</StatusText>
        <button aria-label="Record macro"><svg width="13" height="13"><path d="M1.500 5v7.500h11v-11H6" fill="none" stroke="#555" /><path d="M6 1h7v3H6z" fill="#555" /><circle cx="3" cy="3" r="3" fill="#555" /><path d="M3 6.500h8M3 8.500h8M3 10.500h8" stroke="#555" strokeDasharray="2 1" /></svg></button>
        <Views>
          <ViewButton $on aria-label="Normal view"><svg width="13" height="13" fill="none" stroke="#666"><path d="M.5.500h12v12H.5zM4.500 0v13M8.500 0v13M0 4.500h13M0 8.500h13" /></svg></ViewButton>
          <ViewButton aria-label="Page layout view"><svg width="14" height="13" fill="none" stroke="#666"><path d="M.5.500h13v12H.5zM3.500 2.500h7v8h-7zM5 4.500h4M5 6.500h4M5 8.500h4" /></svg></ViewButton>
          <ViewButton aria-label="Page break view"><svg width="14" height="13" fill="none" stroke="#666"><path d="M.5.500h13v12H.5zM.5 7.500h8v-7M4.500 0v7" /></svg></ViewButton>
        </Views>
        <BarButton $w={12} aria-label="Zoom out"><svg width="6" height="2" fill="#666"><path d="M0 0h6v2H0z" /></svg></BarButton>
        <ZoomSlider type="range" aria-label="Zoom" min={0} max={200} defaultValue={100} />
        <BarButton $w={12} aria-label="Zoom in"><svg width="8" height="8" fill="#666"><path d="M3 0h2v3h3v2H5v3H3V5H0V3h3z" /></svg></BarButton>
        <StatusText $w={34} $right>100%</StatusText>
      </StatusBar>

      <TaskBar>
        <SystemButtons>
          <TaskButton aria-label="Start"><svg width="16" height="16" fill="#fff"><path d="M0 2.300L6.500 1.400V7.500H0zM7.500 1.200L16 0v7.500H7.500zM0 8.500h6.500v6.200L0 13.800zM7.500 8.500H16V16l-8.500-1.200z" /></svg></TaskButton>
          <TaskButton aria-label="Cortana"><svg width="16" height="16" fill="none" stroke="#fff" strokeWidth="2"><circle cx="8" cy="8" r="6.500" /></svg></TaskButton>
          <TaskButton aria-label="Task view"><svg width="17" height="16" fill="none" stroke="#fff"><path d="M.5 0v2.500h10V0M.5 16v-2.500h10V16M.5 4.500h10v7H.5zM14.500 0v3M14.500 9v7" /><path d="M13 4h3v3h-3z" fill="#fff" stroke="none" /></svg></TaskButton>
        </SystemButtons>
        <Apps>
          <TaskButton $open aria-label="Edge"><EdgeIcon /></TaskButton>
          <TaskButton aria-label="File Explorer"><ExplorerIcon /></TaskButton>
          <TaskButton $open aria-label="Outlook"><OutlookIcon /></TaskButton>
          <TaskButton $open $active aria-label="Excel"><ExcelIcon /></TaskButton>
          <TaskButton aria-label="Notepad"><NotepadIcon /></TaskButton>
          <TaskButton aria-label="Paint"><PaintIcon /></TaskButton>
          <TaskButton aria-label="Power BI"><PowerBiIcon /></TaskButton>
          <TaskButton $open aria-label="Sticky Notes"><StickyIcon /></TaskButton>
        </Apps>
        <Tray>
          <TrayButton $w={48} aria-label="People"><svg width="15" height="16" fill="none" stroke="#fff" strokeWidth="1.200"><circle cx="10.500" cy="3.500" r="2.500" /><circle cx="4.500" cy="9" r="2.500" /><path d="M.5 15c0-5 8-5 8 0M7.500 7.500c3-2.500 6.500-1 6.500 2.500" /></svg></TrayButton>
          <TrayButton aria-label="Hidden icons"><Chevron up w={11} color="#fff" sw={1.4} /></TrayButton>
          <TrayButton aria-label="Battery"><svg width="17" height="12" fill="none" stroke="#fff"><path d="M6 2.500h8.500v8H5V7M16 5v3" /><path d="M7 4.500h6v4H7z" fill="#fff" /><path d="M1.500 0v2M3.500 0v2M.5 2.500h4v2l-1 1h-2l-1-1zM2.500 6v4.500H5" /></svg></TrayButton>
          <TrayButton aria-label="OneDrive business"><Cloud color="#0a7bdc" /></TrayButton>
          <TrayButton aria-label="OneDrive"><Cloud color="#fff" /></TrayButton>
          <TrayButton aria-label="Network"><svg width="13" height="13" fill="none" stroke="#b9c3c5" strokeWidth="1.200"><path d="M1 12C1 6 6 1 12 1M4 12.500C4 8 8 4 12.500 4M7 12.500c0-3 2.500-5.500 5.500-5.500" /><circle cx="11" cy="11" r="1.500" fill="#fff" stroke="none" /></svg></TrayButton>
          <TrayButton $w={19} aria-label="Volume"><svg width="16" height="13" fill="none" stroke="#fff"><path d="M.5 4.500h2l4-3.500v11l-4-3.500h-2zM8.500 4.500c1 1 1 3 0 4M10.500 2.500c2 2 2 6 0 8" /><path d="M12.500.500c3 3 3 9 0 12" stroke="#8d9a9c" /></svg></TrayButton>
          <TrayButton $w={44}><span>ENG<br />IN</span></TrayButton>
          <TrayButton $w={70}><span>05:45<br />30-Aug-2018</span></TrayButton>
          <TrayButton $w={52} aria-label="Notifications"><svg width="16" height="16" fill="none" stroke="#fff" strokeWidth="1.200"><path d="M.6.600h14.800v11.400H10.500L8 15l-2.500-3H.6z" /></svg></TrayButton>
          <ShowDesktop aria-label="Show desktop" />
        </Tray>
      </TaskBar>
    </Window>
  );
}
